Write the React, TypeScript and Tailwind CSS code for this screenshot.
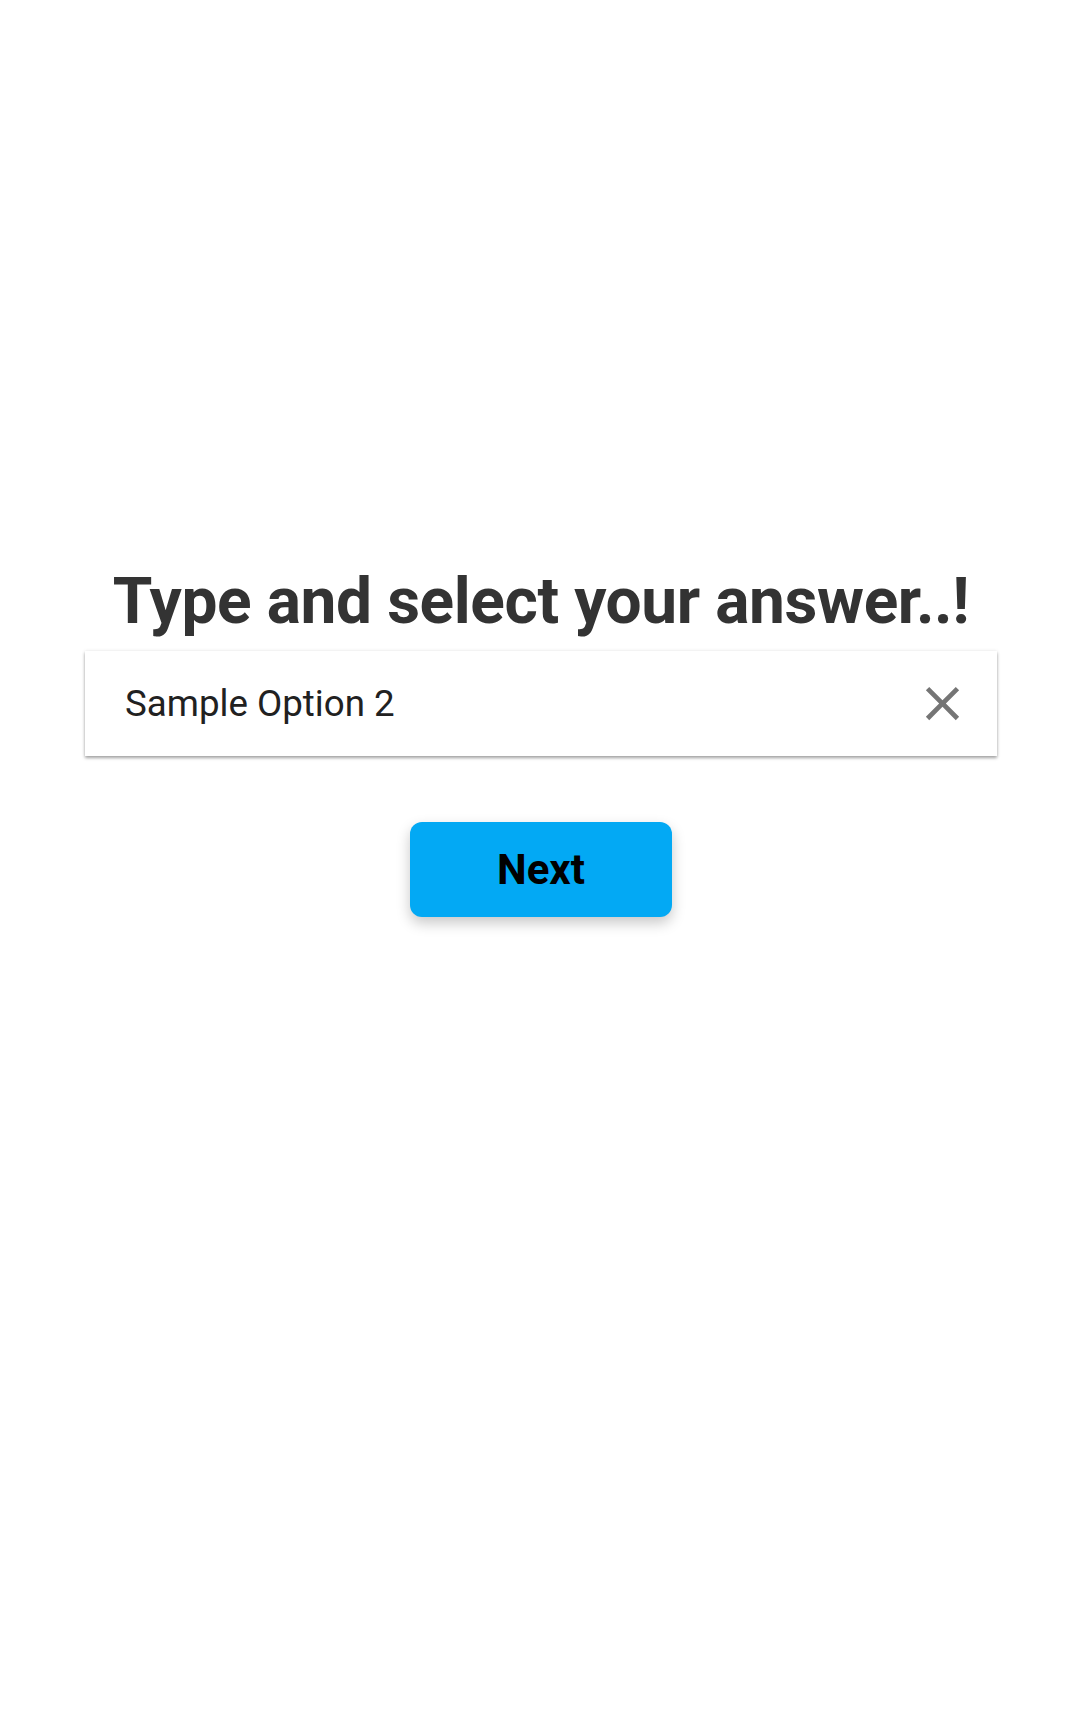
import React from "react";

export default function App() {
  return (
    <div className="min-h-[1731px] w-[1080px] bg-white" style={{ fontFamily: "Roboto, 'Noto Sans', sans-serif" }}>
      <div className="flex flex-col items-center pt-[564px] pl-[2px]">
        <h1 className="text-[64px] leading-[75px] font-bold text-[#333333] tracking-[-0.4px]">
          Type and select your answer..!
        </h1>
        <div className="mt-[12px] flex h-[105px] w-[912px] items-center justify-between bg-white pl-[40px] pr-[26px] shadow-[0_2px_3px_rgba(0,0,0,0.35),0_0_4px_rgba(0,0,0,0.08)]">
          <span className="text-[36.7px] text-[#212121]">Sample Option 2</span>
          <svg width="57" height="57" viewBox="0 0 24 24" className="text-[#757575]">
            <path
              fill="currentColor"
              d="M19 6.41 17.59 5 12 10.59 6.41 5 5 6.41 10.59 12 5 17.59 6.41 19 12 13.41 17.59 19 19 17.59 13.41 12z"
            />
          </svg>
        </div>
        <button className="mt-[66px] flex h-[95px] w-[262px] items-center justify-center rounded-[12px] bg-[#03A9F4] text-[42px] font-bold text-black shadow-[0_6px_14px_rgba(0,0,0,0.22)]">
          Next
        </button>
      </div>
    </div>
  );
}
